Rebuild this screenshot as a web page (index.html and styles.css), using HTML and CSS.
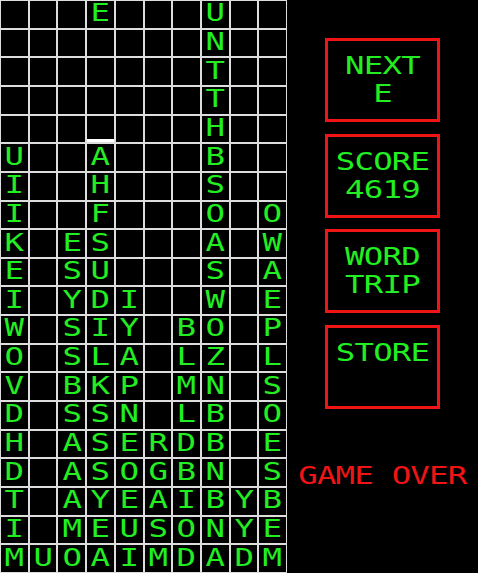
FILE: index.html
```html
<!DOCTYPE html>
<html lang="en">
<head>
<meta charset="utf-8">
<title>Word Trip</title>
<link rel="stylesheet" href="styles.css">
</head>
<body>
<div class="game">
  <div class="board">
    <div class="cell"></div><div class="cell"></div><div class="cell"></div><div class="cell"><span class="ch">E</span></div><div class="cell"></div><div class="cell"></div><div class="cell"></div><div class="cell"><span class="ch">U</span></div><div class="cell"></div><div class="cell"></div>
    <div class="cell"></div><div class="cell"></div><div class="cell"></div><div class="cell"></div><div class="cell"></div><div class="cell"></div><div class="cell"></div><div class="cell"><span class="ch">N</span></div><div class="cell"></div><div class="cell"></div>
    <div class="cell"></div><div class="cell"></div><div class="cell"></div><div class="cell"></div><div class="cell"></div><div class="cell"></div><div class="cell"></div><div class="cell"><span class="ch">T</span></div><div class="cell"></div><div class="cell"></div>
    <div class="cell"></div><div class="cell"></div><div class="cell"></div><div class="cell"></div><div class="cell"></div><div class="cell"></div><div class="cell"></div><div class="cell"><span class="ch">T</span></div><div class="cell"></div><div class="cell"></div>
    <div class="cell"></div><div class="cell"></div><div class="cell"></div><div class="cell cursor"></div><div class="cell"></div><div class="cell"></div><div class="cell"></div><div class="cell"><span class="ch">H</span></div><div class="cell"></div><div class="cell"></div>
    <div class="cell"><span class="ch">U</span></div><div class="cell"></div><div class="cell"></div><div class="cell"><span class="ch">A</span></div><div class="cell"></div><div class="cell"></div><div class="cell"></div><div class="cell"><span class="ch">B</span></div><div class="cell"></div><div class="cell"></div>
    <div class="cell"><span class="ch">I</span></div><div class="cell"></div><div class="cell"></div><div class="cell"><span class="ch">H</span></div><div class="cell"></div><div class="cell"></div><div class="cell"></div><div class="cell"><span class="ch">S</span></div><div class="cell"></div><div class="cell"></div>
    <div class="cell"><span class="ch">I</span></div><div class="cell"></div><div class="cell"></div><div class="cell"><span class="ch">F</span></div><div class="cell"></div><div class="cell"></div><div class="cell"></div><div class="cell"><span class="ch">O</span></div><div class="cell"></div><div class="cell"><span class="ch">O</span></div>
    <div class="cell"><span class="ch">K</span></div><div class="cell"></div><div class="cell"><span class="ch">E</span></div><div class="cell"><span class="ch">S</span></div><div class="cell"></div><div class="cell"></div><div class="cell"></div><div class="cell"><span class="ch">A</span></div><div class="cell"></div><div class="cell"><span class="ch">W</span></div>
    <div class="cell"><span class="ch">E</span></div><div class="cell"></div><div class="cell"><span class="ch">S</span></div><div class="cell"><span class="ch">U</span></div><div class="cell"></div><div class="cell"></div><div class="cell"></div><div class="cell"><span class="ch">S</span></div><div class="cell"></div><div class="cell"><span class="ch">A</span></div>
    <div class="cell"><span class="ch">I</span></div><div class="cell"></div><div class="cell"><span class="ch">Y</span></div><div class="cell"><span class="ch">D</span></div><div class="cell"><span class="ch">I</span></div><div class="cell"></div><div class="cell"></div><div class="cell"><span class="ch">W</span></div><div class="cell"></div><div class="cell"><span class="ch">E</span></div>
    <div class="cell"><span class="ch">W</span></div><div class="cell"></div><div class="cell"><span class="ch">S</span></div><div class="cell"><span class="ch">I</span></div><div class="cell"><span class="ch">Y</span></div><div class="cell"></div><div class="cell"><span class="ch">B</span></div><div class="cell"><span class="ch">O</span></div><div class="cell"></div><div class="cell"><span class="ch">P</span></div>
    <div class="cell"><span class="ch">O</span></div><div class="cell"></div><div class="cell"><span class="ch">S</span></div><div class="cell"><span class="ch">L</span></div><div class="cell"><span class="ch">A</span></div><div class="cell"></div><div class="cell"><span class="ch">L</span></div><div class="cell"><span class="ch">Z</span></div><div class="cell"></div><div class="cell"><span class="ch">L</span></div>
    <div class="cell"><span class="ch">V</span></div><div class="cell"></div><div class="cell"><span class="ch">B</span></div><div class="cell"><span class="ch">K</span></div><div class="cell"><span class="ch">P</span></div><div class="cell"></div><div class="cell"><span class="ch">M</span></div><div class="cell"><span class="ch">N</span></div><div class="cell"></div><div class="cell"><span class="ch">S</span></div>
    <div class="cell"><span class="ch">D</span></div><div class="cell"></div><div class="cell"><span class="ch">S</span></div><div class="cell"><span class="ch">S</span></div><div class="cell"><span class="ch">N</span></div><div class="cell"></div><div class="cell"><span class="ch">L</span></div><div class="cell"><span class="ch">B</span></div><div class="cell"></div><div class="cell"><span class="ch">O</span></div>
    <div class="cell"><span class="ch">H</span></div><div class="cell"></div><div class="cell"><span class="ch">A</span></div><div class="cell"><span class="ch">S</span></div><div class="cell"><span class="ch">E</span></div><div class="cell"><span class="ch">R</span></div><div class="cell"><span class="ch">D</span></div><div class="cell"><span class="ch">B</span></div><div class="cell"></div><div class="cell"><span class="ch">E</span></div>
    <div class="cell"><span class="ch">D</span></div><div class="cell"></div><div class="cell"><span class="ch">A</span></div><div class="cell"><span class="ch">S</span></div><div class="cell"><span class="ch">O</span></div><div class="cell"><span class="ch">G</span></div><div class="cell"><span class="ch">B</span></div><div class="cell"><span class="ch">N</span></div><div class="cell"></div><div class="cell"><span class="ch">S</span></div>
    <div class="cell"><span class="ch">T</span></div><div class="cell"></div><div class="cell"><span class="ch">A</span></div><div class="cell"><span class="ch">Y</span></div><div class="cell"><span class="ch">E</span></div><div class="cell"><span class="ch">A</span></div><div class="cell"><span class="ch">I</span></div><div class="cell"><span class="ch">B</span></div><div class="cell"><span class="ch">Y</span></div><div class="cell"><span class="ch">B</span></div>
    <div class="cell"><span class="ch">I</span></div><div class="cell"></div><div class="cell"><span class="ch">M</span></div><div class="cell"><span class="ch">E</span></div><div class="cell"><span class="ch">U</span></div><div class="cell"><span class="ch">S</span></div><div class="cell"><span class="ch">O</span></div><div class="cell"><span class="ch">N</span></div><div class="cell"><span class="ch">Y</span></div><div class="cell"><span class="ch">E</span></div>
    <div class="cell"><span class="ch">M</span></div><div class="cell"><span class="ch">U</span></div><div class="cell"><span class="ch">O</span></div><div class="cell"><span class="ch">A</span></div><div class="cell"><span class="ch">I</span></div><div class="cell"><span class="ch">M</span></div><div class="cell"><span class="ch">D</span></div><div class="cell"><span class="ch">A</span></div><div class="cell"><span class="ch">D</span></div><div class="cell"><span class="ch">M</span></div>
  </div>
  <div class="side">
    <div class="panels">
      <div class="panel">
        <div class="panel-line">NEXT</div>
        <div class="panel-line">E</div>
      </div>
      <div class="panel">
        <div class="panel-line">SCORE</div>
        <div class="panel-line">4619</div>
      </div>
      <div class="panel">
        <div class="panel-line">WORD</div>
        <div class="panel-line">TRIP</div>
      </div>
      <div class="panel">
        <div class="panel-line">STORE</div>
      </div>
    </div>
    <div class="game-over">GAME OVER</div>
  </div>
</div>
</body>
</html>
```
FILE: styles.css
```css
html, body {
  margin: 0;
  padding: 0;
  background: #000;
}

body {
  font-family: "DejaVu Sans Mono", "Liberation Mono", monospace;
  color: #22ee22;
}

.game {
  display: flex;
  width: 478px;
  height: 573px;
}

.board {
  width: 287px;
  height: 573px;
  box-sizing: border-box;
  padding: 1px;
  display: grid;
  grid-template-columns: repeat(10, 1fr);
  grid-template-rows: repeat(20, 1fr);
  gap: 2px;
  background: #dddddd;
  flex: none;
}

.cell {
  background: #000;
  display: flex;
  align-items: center;
  justify-content: center;
  overflow: visible;
  font-size: 24px;
  line-height: 26px;
}

.cell.cursor {
  box-shadow: inset 0 -3px 0 #ffffff;
}

.ch {
  display: inline-block;
  transform: scaleX(1.35);
  margin-top: -2px;
}

.side {
  flex: 1;
  display: flex;
  flex-direction: column;
  align-items: center;
  padding-top: 38px;
}

.panels {
  display: flex;
  flex-direction: column;
  gap: 11.7px;
}

.panel {
  width: 115px;
  height: 84px;
  box-sizing: border-box;
  border: 3px solid #f01414;
  padding-top: 11px;
}

.panel-line {
  font-size: 24px;
  line-height: 28px;
  text-align: center;
  letter-spacing: -0.6px;
  transform: scaleX(1.35);
}

.game-over {
  margin-top: 53px;
  color: #f01414;
  font-size: 24px;
  line-height: 28px;
  letter-spacing: -0.6px;
  text-align: center;
  white-space: nowrap;
  transform: scaleX(1.35);
}
```
